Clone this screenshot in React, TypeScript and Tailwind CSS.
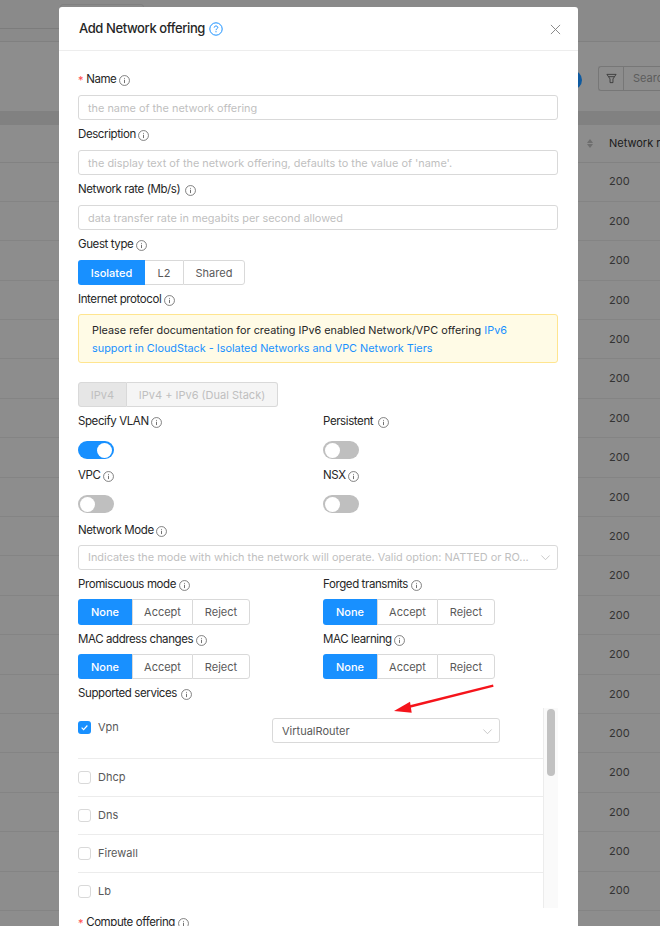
import React from "react";

const Info = () => (
  <svg viewBox="0 0 12 12" className="w-[11px] h-[11px] ml-[2.5px] shrink-0 text-[#555]" fill="none" stroke="currentColor">
    <circle cx="6" cy="6" r="5.4" strokeWidth="0.8" />
    <path d="M6 5.2V8.8" strokeWidth="0.9" />
    <path d="M6 3.2V4.1" strokeWidth="0.9" />
  </svg>
);

const Label = ({ text, required, gap }: { text: string; required?: boolean; gap?: boolean }) => (
  <div className="h-[16px] pt-[2px] flex items-center text-[11.5px] tracking-[-0.4px] text-[#262626] leading-none">
    {required && <span className="text-[#ff4d4f] mr-[3px] text-[11px]">*</span>}
    <span>{text}</span>
    {gap && <span className="w-[2px]" />}
    <Info />
  </div>
);

const Input = ({ placeholder }: { placeholder: string }) => (
  <div className="h-[25px] w-[480px] border border-[#d9d9d9] rounded-[3px] px-[9px] pt-[2px] flex items-center text-[10.9px] text-[#bfbfbf] whitespace-nowrap overflow-hidden">
    {placeholder}
  </div>
);

const Chevron = ({ className }: { className: string }) => (
  <svg viewBox="0 0 12 12" className={className} fill="none" stroke="currentColor" strokeWidth="0.9">
    <path d="M1.5 3.8L6 8.4L10.5 3.8" />
  </svg>
);

const Radios = ({ items, tall }: { items: { t: string; w: string }[]; tall?: boolean }) => (
  <div className={`flex text-[11px] text-[#595959] ${tall ? "h-[26px]" : "h-[25px] pt-0"}`}>
    {items.map((it, i) => (
      <div
        key={it.t}
        className={`flex items-center justify-center ${tall ? "" : "pt-[1px]"} ${it.w} ${
          i === 0
            ? "bg-[#1890ff] text-white rounded-l-[3px] font-medium"
            : i === items.length - 1
              ? "border border-[#d9d9d9] rounded-r-[3px]"
              : "border-y border-l border-[#d9d9d9]"
        }`}
      >
        {it.t}
      </div>
    ))}
  </div>
);

const modes = [
  { t: "None", w: "w-[54px]" },
  { t: "Accept", w: "w-[60px]" },
  { t: "Reject", w: "w-[58px]" },
];

const Switch = ({ on }: { on?: boolean }) => (
  <div className={`w-[35.5px] h-[18px] rounded-full flex items-center px-[1.5px] ${on ? "bg-[#1890ff] justify-end" : "bg-[#bfbfbf] justify-start"}`}>
    <div className="w-[15px] h-[15px] rounded-full bg-white" />
  </div>
);

const Service = ({ name }: { name: string }) => (
  <div className="h-[37.9px] border-t border-[#ececec] flex items-center gap-[7px] text-[11px] text-[#595959]">
    <div className="w-[13px] h-[13px] border border-[#d9d9d9] rounded-[3px] bg-white" />
    <span>{name}</span>
  </div>
);

const rows = Array.from({ length: 19 });

export default function App() {
  return (
    <div className="relative w-[660px] h-[926px] overflow-hidden bg-[#8d8d8d] font-['Inter',sans-serif]">
      {/* dimmed page behind the dialog */}
      <div className="h-[42px] bg-[#8a8a8a] border-b border-[#808080] flex flex-col">
        <div className="h-[29px] border-b border-[#7c7c7c] w-[60px]" />
      </div>
      <div className="h-[69px] flex items-start justify-end pt-[24px]">
        <div className="flex h-[25px] w-[62px] border border-[#777] rounded-l-[3px] border-r-0 overflow-hidden">
          <div className="w-[25px] shrink-0 flex items-center justify-center border-r border-[#777] text-[#333]">
            <svg viewBox="0 0 12 12" className="w-[11px] h-[11px]" fill="none" stroke="currentColor" strokeWidth="0.9">
              <path d="M1 1.5H11L7.6 6.5V10.5H4.4V6.5Z" />
              <path d="M3 4H9" />
            </svg>
          </div>
          <div className="pl-[9px] text-[11px] text-[#5c5c5c] leading-[23px] whitespace-nowrap">Search</div>
        </div>
      </div>
      <div className="h-[14px] bg-[#818181]" />
      <div className="h-[37.5px] border-b border-[#828282] flex items-center pl-[609px] text-[11px] text-[#1a1a1a] whitespace-nowrap">
        Network rate
      </div>
      {rows.map((_, i) => (
        <div key={i} className="h-[39.4px] border-b border-[#848484] flex items-center pl-[609px] text-[11px] text-[#333]">
          200
        </div>
      ))}

      {/* overlay pieces */}
      <div className="absolute left-[60px] top-[4px] w-[84px] h-[10px] border border-[#808080] rounded-[3px]" />
      <div className="absolute left-[570px] top-[70px] w-[12px] h-[20px] rounded-r-full bg-[#0e5aa0]" />
      <div className="absolute left-[587px] top-[139px] flex flex-col gap-[1px]">
        <div className="w-0 h-0 border-x-[3px] border-x-transparent border-b-[4px] border-b-[#6e6e6e]" />
        <div className="w-0 h-0 border-x-[3px] border-x-transparent border-t-[4px] border-t-[#6e6e6e]" />
      </div>

      {/* dialog */}
      <div className="absolute left-[59px] top-[7px] w-[519px] h-[960px] bg-white rounded-[3px]">
        <div className="h-[44px] pt-[1px] border-b border-[#ededed] flex items-center justify-between pl-[20px] pr-[17px]">
          <div className="flex items-center text-[13px] tracking-[-0.4px] font-medium text-[#262626]">
            Add Network offering
            <svg viewBox="0 0 14 14" className="w-[14px] h-[14px] ml-[4px] text-[#1890ff]" fill="none" stroke="currentColor">
              <circle cx="7" cy="7" r="6.2" strokeWidth="1" />
              <path d="M5.2 5.6C5.2 4.6 6 4 7 4C8 4 8.8 4.6 8.8 5.5C8.8 6.6 7 6.8 7 8.2" strokeWidth="1" />
              <path d="M7 9.3V10.3" strokeWidth="1.1" />
            </svg>
          </div>
          <svg viewBox="0 0 12 12" className="w-[11px] h-[11px] text-[#808080]" fill="none" stroke="currentColor" strokeWidth="1">
            <path d="M1 1L11 11M11 1L1 11" />
          </svg>
        </div>

        <div className="pl-[19px] pt-[20px] w-[499px]">
          <Label text="Name" required />
          <div className="mt-[8px] mb-[6px]"><Input placeholder="the name of the network offering" /></div>
          <Label text="Description" />
          <div className="mt-[8px] mb-[6px]"><Input placeholder="the display text of the network offering, defaults to the value of 'name'." /></div>
          <Label text="Network rate (Mb/s)" gap />
          <div className="mt-[8px] mb-[6px]"><Input placeholder="data transfer rate in megabits per second allowed" /></div>
          <Label text="Guest type" />
          <div className="mt-[8px] mb-[6px] flex h-[25px] text-[11px] text-[#595959]">
            <div className="w-[67px] pt-[2px] flex items-center justify-center bg-[#1890ff] text-white font-medium rounded-l-[3px]">Isolated</div>
            <div className="w-[38px] pt-[2px] flex items-center justify-center border-y border-[#d9d9d9]">L2</div>
            <div className="w-[62px] pt-[2px] flex items-center justify-center border border-[#d9d9d9] rounded-r-[3px]">Shared</div>
          </div>
          <Label text="Internet protocol" />
          <div className="mt-[7px] h-[49px] w-[480px] border border-[#ffe58f] bg-[#fffbe6] rounded-[3px] px-[13px] py-[6px] text-[10.85px] leading-[18px] text-[#262626]">
            Please refer documentation for creating IPv6 enabled Network/VPC offering{" "}
            <span className="text-[#1890ff]">IPv6 support in CloudStack - Isolated Networks and VPC Network Tiers</span>
          </div>
          <div className="mt-[19px] mb-[6px] flex h-[25px] text-[11px] text-[#bfbfbf]">
            <div className="w-[49px] pt-[2px] flex items-center justify-center bg-[#e6e6e6] border border-[#d9d9d9] rounded-l-[3px]">IPv4</div>
            <div className="w-[151px] pt-[2px] flex items-center justify-center bg-[#f5f5f5] border-y border-r border-[#d9d9d9] rounded-r-[3px]">IPv4 + IPv6 (Dual Stack)</div>
          </div>

          <div className="grid grid-cols-[245px_235px]">
            <div>
              <Label text="Specify VLAN" />
              <div className="mt-[12px] mb-[8px]"><Switch on /></div>
            </div>
            <div>
              <Label text="Persistent" gap />
              <div className="mt-[12px] mb-[8px]"><Switch /></div>
            </div>
            <div>
              <Label text="VPC" />
              <div className="mt-[12px] mb-[9px]"><Switch /></div>
            </div>
            <div>
              <Label text="NSX" />
              <div className="mt-[12px] mb-[9px]"><Switch /></div>
            </div>
          </div>

          <Label text="Network Mode" />
          <div className="mt-[7px] mb-[6px] h-[25px] w-[480px] border border-[#d9d9d9] rounded-[3px] pl-[9px] pr-[6px] flex items-center justify-between text-[10.9px] text-[#bfbfbf] whitespace-nowrap">
            <span>Indicates the mode with which the network will operate. Valid option: NATTED or RO...</span>
            <Chevron className="w-[11px] h-[11px] text-[#bfbfbf]" />
          </div>

          <div className="grid grid-cols-[245px_235px]">
            <div>
              <Label text="Promiscuous mode" />
              <div className="mt-[7px] mb-[6px]"><Radios items={modes} tall /></div>
            </div>
            <div>
              <Label text="Forged transmits" />
              <div className="mt-[7px] mb-[6px]"><Radios items={modes} tall /></div>
            </div>
            <div>
              <Label text="MAC address changes" />
              <div className="mt-[7px] mb-[6px]"><Radios items={modes} /></div>
            </div>
            <div>
              <Label text="MAC learning" />
              <div className="mt-[7px] mb-[6px]"><Radios items={modes} /></div>
            </div>
          </div>

          <Label text="Supported services" gap />

          <div className="relative mt-[7px] h-[200px] w-[480px] overflow-hidden">
            <div className="w-[466px]">
              <div className="h-[50px] pt-[11px] flex items-start justify-between text-[11px] text-[#595959]">
                <div className="flex items-center gap-[7px]">
                  <div className="w-[13px] h-[13px] rounded-[3px] bg-[#1890ff] flex items-center justify-center">
                    <svg viewBox="0 0 10 10" className="w-[9px] h-[9px]" fill="none" stroke="white" strokeWidth="1.3">
                      <path d="M1.8 5.2L4 7.3L8.2 2.8" />
                    </svg>
                  </div>
                  <span>Vpn</span>
                </div>
                <div className="-mt-[1px] mr-[44px] h-[25px] w-[228px] border border-[#d9d9d9] rounded-[3px] pl-[9px] pr-[6px] pt-[2px] flex items-center justify-between">
                  <span>VirtualRouter</span>
                  <Chevron className="w-[11px] h-[11px] text-[#bfbfbf]" />
                </div>
              </div>
              <Service name="Dhcp" />
              <Service name="Dns" />
              <Service name="Firewall" />
              <Service name="Lb" />
            </div>
            <div className="absolute left-[465px] top-0 bottom-0 w-[15px] border-l border-[#ececec] bg-[#fafafa]">
              <div className="mx-auto mt-[1px] w-[8px] h-[67px] rounded-full bg-[#c1c1c1]" />
            </div>
          </div>

          <div className="mt-[6px]"><Label text="Compute offering" required /></div>
        </div>
      </div>

      {/* annotation arrow */}
      <svg className="absolute left-[390px] top-[680px] w-[110px] h-[36px]" viewBox="0 0 110 36">
        <path d="M103.3 5.7L18 27" stroke="#f5141b" strokeWidth="2.4" fill="none" />
        <path d="M4 31L20 21.7L21.7 32.7Z" fill="#f5141b" />
      </svg>
    </div>
  );
}
